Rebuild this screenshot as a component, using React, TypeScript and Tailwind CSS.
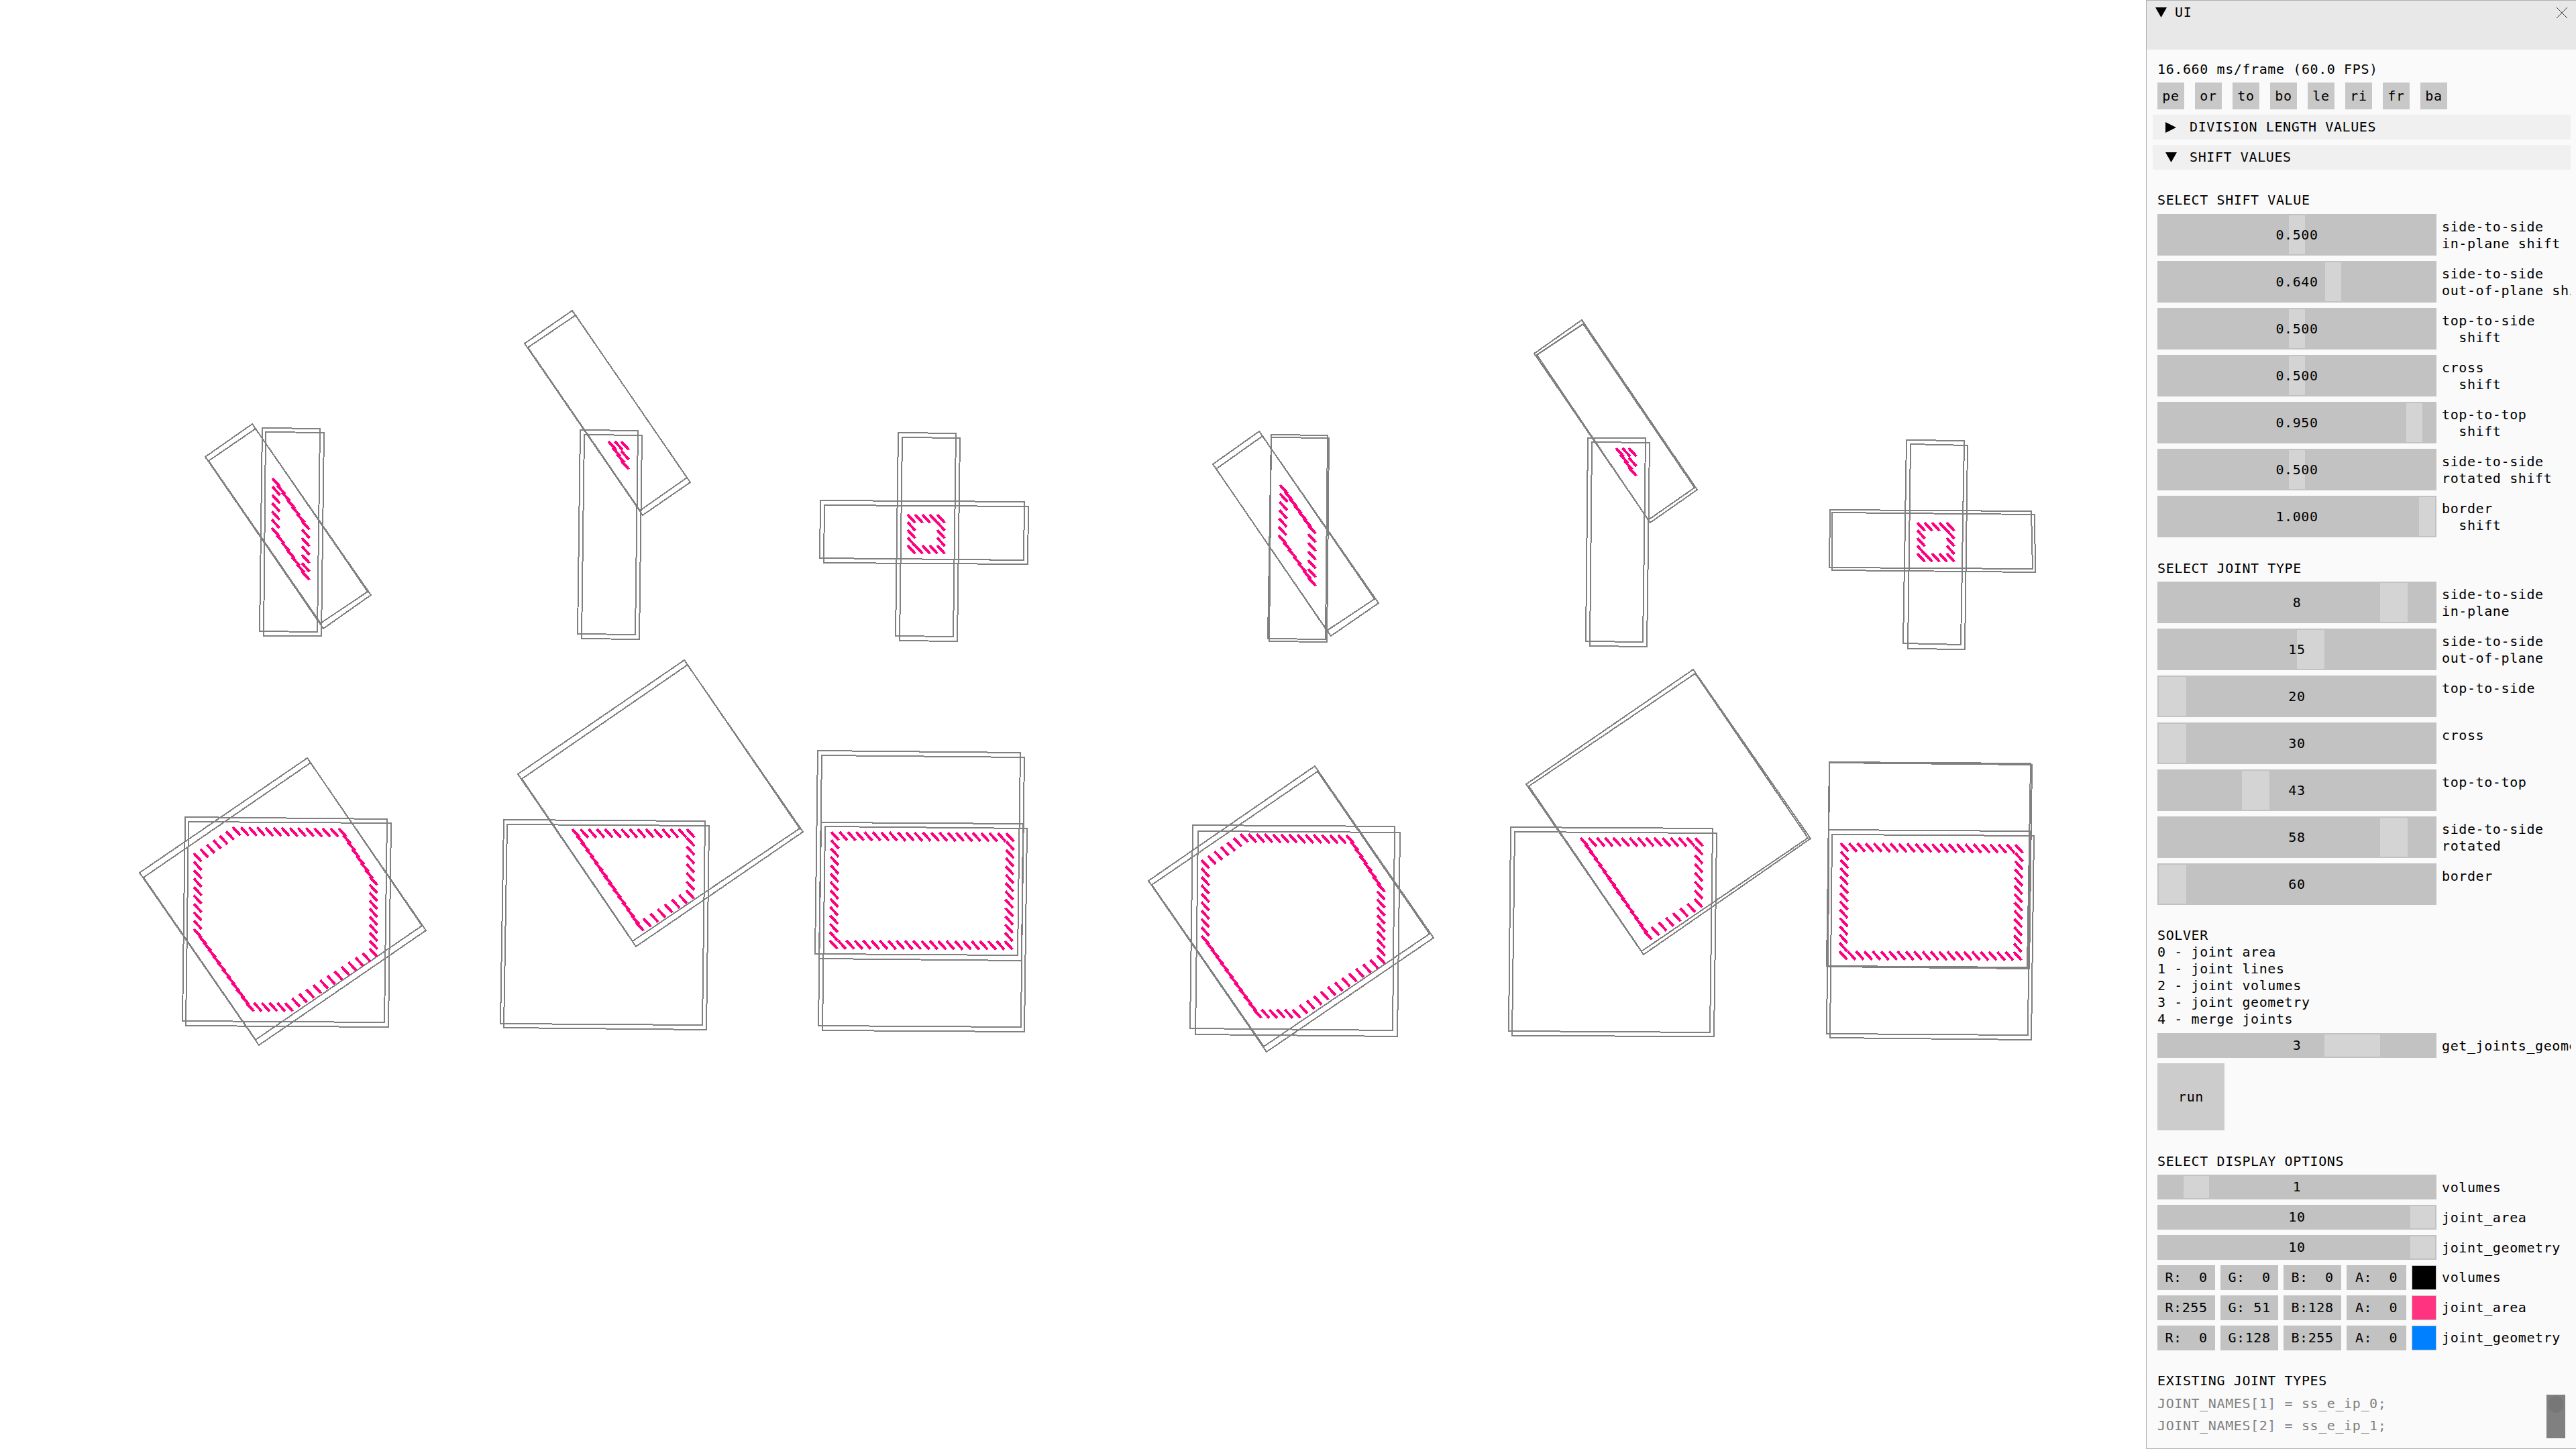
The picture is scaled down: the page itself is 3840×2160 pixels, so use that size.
type Pt = [number, number];

// outlines are in page pixels, read off the reference
const OUTLINES: Pt[][] = [
  // left group, top row
  [[391, 638], [477, 639], [473, 942], [387, 941]],
  [[396, 644], [483, 645], [479, 948], [393, 948]],
  [[376, 632], [553, 887], [482, 937], [306, 681]],
  [[381, 639], [548, 882], [478, 929], [311, 687]],
  [[865, 641], [951, 642], [947, 946], [861, 945]],
  [[871, 648], [957, 649], [953, 953], [867, 952]],
  [[853, 463], [1029, 719], [958, 768], [782, 512]],
  [[858, 470], [1024, 712], [954, 761], [787, 518]],
  [[1339, 645], [1425, 646], [1421, 949], [1335, 948]],
  [[1345, 652], [1431, 653], [1427, 956], [1341, 955]],
  [[1223, 746], [1527, 748], [1526, 835], [1222, 832]],
  [[1229, 753], [1533, 755], [1532, 841], [1228, 839]],
  // left group, bottom row
  [[276, 1218], [577, 1221], [573, 1524], [272, 1522]],
  [[281, 1225], [583, 1227], [579, 1531], [277, 1529]],
  [[458, 1130], [635, 1387], [386, 1558], [208, 1301]],
  [[463, 1137], [629, 1380], [381, 1550], [214, 1308]],
  [[751, 1222], [1051, 1224], [1047, 1528], [746, 1526]],
  [[756, 1229], [1057, 1231], [1053, 1535], [751, 1532]],
  [[1020, 984], [1197, 1240], [948, 1411], [772, 1154]],
  [[1025, 991], [1192, 1235], [943, 1403], [778, 1161]],
  [[1219, 1119], [1521, 1122], [1517, 1424], [1215, 1422]],
  [[1225, 1126], [1527, 1129], [1523, 1432], [1221, 1429]],
  [[1224, 1226], [1525, 1228], [1522, 1531], [1220, 1529]],
  [[1230, 1232], [1531, 1235], [1527, 1538], [1226, 1536]],
  // right group, top row
  [[1895, 648], [1979, 649], [1976, 953], [1890, 952]],
  [[1895, 652], [1981, 653], [1978, 957], [1892, 956]],
  [[1877, 643], [2055, 899], [1984, 948], [1808, 692]],
  [[1882, 650], [2049, 893], [1978, 940], [1813, 699]],
  [[2367, 653], [2453, 653], [2449, 957], [2364, 956]],
  [[2373, 659], [2459, 660], [2455, 964], [2370, 963]],
  [[2358, 477], [2530, 730], [2460, 779], [2287, 527]],
  [[2360, 483], [2526, 727], [2457, 775], [2291, 529]],
  [[2842, 656], [2928, 657], [2923, 961], [2837, 959]],
  [[2848, 662], [2933, 664], [2929, 968], [2844, 967]],
  [[2728, 760], [3028, 762], [3030, 848], [2727, 846]],
  [[2731, 764], [3033, 767], [3034, 853], [2731, 850]],
  // right group, bottom row
  [[1778, 1230], [2079, 1232], [2076, 1536], [1774, 1533]],
  [[1786, 1239], [2087, 1241], [2083, 1545], [1782, 1542]],
  [[1960, 1142], [2137, 1398], [1888, 1568], [1712, 1313]],
  [[1964, 1150], [2131, 1392], [1884, 1560], [1717, 1319]],
  [[2252, 1233], [2553, 1235], [2549, 1539], [2249, 1537]],
  [[2258, 1240], [2559, 1242], [2555, 1545], [2254, 1544]],
  [[2524, 998], [2699, 1250], [2450, 1423], [2275, 1169]],
  [[2527, 1004], [2695, 1249], [2447, 1418], [2279, 1172]],
  [[2727, 1136], [3027, 1138], [3022, 1442], [2723, 1440]],
  [[2727, 1137], [3029, 1140], [3025, 1444], [2725, 1441]],
  [[2726, 1237], [3026, 1239], [3023, 1543], [2723, 1541]],
  [[2731, 1244], [3032, 1246], [3028, 1550], [2728, 1547]],
];

const HATCHES: Pt[][] = [
  [[406, 713], [450, 777], [450, 852], [405, 787]],
  [[907, 658], [926, 658], [926, 687]],
  [[1353, 767], [1397, 767], [1397, 813], [1353, 813]],
  [[347, 1233], [505, 1235], [551, 1307], [551, 1414], [425, 1495], [367, 1495], [289, 1385], [289, 1272]],
  [[853, 1236], [1024, 1236], [1023, 1327], [959, 1369], [948, 1375]],
  [[1239, 1240], [1500, 1242], [1498, 1403], [1237, 1402]],
  [[1908, 723], [1950, 783], [1950, 861], [1906, 798]],
  [[2409, 668], [2428, 668], [2428, 697]],
  [[2858, 779], [2902, 779], [2902, 825], [2858, 825]],
  [[1849, 1243], [2007, 1245], [2053, 1317], [2053, 1424], [1927, 1505], [1869, 1505], [1791, 1395], [1791, 1282]],
  [[2356, 1249], [2527, 1249], [2526, 1340], [2462, 1382], [2451, 1388]],
  [[2744, 1257], [3004, 1259], [3002, 1419], [2742, 1418]],
];

const TICK_SPACING = 12.2;

function hatchTicks(poly: Pt[]) {
  const ticks: Pt[] = [];
  poly.forEach((a, i) => {
    const b = poly[(i + 1) % poly.length];
    const n = Math.max(1, Math.round(Math.hypot(b[0] - a[0], b[1] - a[1]) / TICK_SPACING));
    for (let j = 0; j < n; j++) {
      ticks.push([a[0] + ((b[0] - a[0]) * j) / n, a[1] + ((b[1] - a[1]) * j) / n]);
    }
  });
  return ticks;
}

const Canvas = () => (
  <svg width="3199" height="2160" viewBox="0 0 3199 2160" className="block shrink-0" shapeRendering="crispEdges">
    {OUTLINES.map((poly, i) => (
      <polygon key={i} points={poly.map((p) => p.join(",")).join(" ")} fill="none" stroke="#808080" strokeWidth="2" />
    ))}
    {HATCHES.map((poly, i) => (
      <g key={i} stroke="#ff0080" strokeWidth="4">
        {hatchTicks(poly).map(([x, y], j) => (
          <line key={j} x1={x} y1={y} x2={x + 11.5} y2={y + 12.5} />
        ))}
      </g>
    ))}
  </svg>
);

const Triangle = ({ dir, className }: { dir: "down" | "right"; className: string }) => (
  <svg viewBox="0 0 16 16" preserveAspectRatio="none" className={className}>
    <polygon points={dir === "down" ? "0,0 16,0 8,16" : "0,0 16,8 0,16"} fill="#000" />
  </svg>
);

const Slider = ({ value, label, grab, width, tall = true }: { value: string; label: string; grab: number; width: number; tall?: boolean }) => (
  <div className="flex items-start">
    <div className={`relative flex w-[416px] shrink-0 items-center justify-center bg-[#c2c2c2] ${tall ? "h-[62px]" : "h-[37px]"}`}>
      <div className="absolute top-[2px] bottom-[2px] bg-[#d4d4d4]" style={{ left: grab, width }} />
      <span className="relative">{value}</span>
    </div>
    <div className="ml-2 min-w-0 flex-1 overflow-hidden pt-[7px] whitespace-pre">{label}</div>
  </div>
);

const ColorRow = ({ rgba, swatch, label }: { rgba: string[]; swatch: string; label: string }) => (
  <div className="flex h-[37px] items-center">
    {rgba.map((c, i) => (
      <div key={i} className={`mr-2 flex h-[37px] items-center justify-center bg-[#c2c2c2] whitespace-pre ${i === 3 ? "w-[89px]" : "w-[86px]"}`}>
        {c}
      </div>
    ))}
    <div className={`h-[37px] w-[37px] border border-[#c4c4c4] ${swatch}`} />
    <div className="ml-2 whitespace-pre">{label}</div>
  </div>
);

const SHIFT_ROWS = [
  { value: "0.500", label: "side-to-side\nin-plane shift", grab: 196 },
  { value: "0.640", label: "side-to-side\nout-of-plane shift", grab: 250 },
  { value: "0.500", label: "top-to-side\n  shift", grab: 196 },
  { value: "0.500", label: "cross\n  shift", grab: 196 },
  { value: "0.950", label: "top-to-top\n  shift", grab: 371 },
  { value: "0.500", label: "side-to-side\nrotated shift", grab: 196 },
  { value: "1.000", label: "border\n  shift", grab: 390 },
];

const JOINT_ROWS = [
  { value: "8", label: "side-to-side\nin-plane", grab: 332 },
  { value: "15", label: "side-to-side\nout-of-plane", grab: 208 },
  { value: "20", label: "top-to-side", grab: 2 },
  { value: "30", label: "cross", grab: 2 },
  { value: "43", label: "top-to-top", grab: 126 },
  { value: "58", label: "side-to-side\nrotated", grab: 332 },
  { value: "60", label: "border", grab: 2 },
];

const Panel = () => (
  <div className="flex h-[2160px] w-[641px] shrink-0 flex-col overflow-hidden border border-r-0 border-[#b0b0b0] bg-[#fafafa] font-['DejaVu_Sans_Mono',monospace] text-[20px] leading-[25px] tracking-[0.6px] text-black">
    <div className="flex h-[73px] shrink-0 items-start bg-[#e8e8e8] pt-[5px] pl-[13px]">
      <Triangle dir="down" className="mt-[5px] h-[15px] w-[17px]" />
      <span className="ml-3">UI</span>
      <svg viewBox="0 0 16 16" className="mt-[5px] mr-[13px] ml-auto h-4 w-4">
        <path d="M0 0L16 16M16 0L0 16" stroke="#333" strokeWidth="1" fill="none" />
      </svg>
    </div>
    <div className="flex flex-1 flex-col pr-2 pl-4">
      <div className="mt-[17px]">16.660 ms/frame (60.0 FPS)</div>
      <div className="mt-[7px] flex gap-4">
        {["pe", "or", "to", "bo", "le", "ri", "fr", "ba"].map((b) => (
          <div key={b} className="flex h-10 w-10 items-center justify-center bg-[#c8c8c8]">{b}</div>
        ))}
      </div>
      <div className="mt-2 -ml-[7px] flex h-[37px] items-center bg-[#f0f0f0] pl-[19px]">
        <Triangle dir="right" className="h-4 w-4" />
        <span className="ml-5">DIVISION LENGTH VALUES</span>
      </div>
      <div className="mt-2 -ml-[7px] flex h-[37px] items-center bg-[#f0f0f0] pl-[19px]">
        <Triangle dir="down" className="h-[15px] w-[17px]" />
        <span className="ml-[19px]">SHIFT VALUES</span>
      </div>

      <div className="mt-[33px] mb-2">SELECT SHIFT VALUE</div>
      <div className="flex flex-col gap-2">
        {SHIFT_ROWS.map((r, i) => (
          <Slider key={i} value={r.value} label={r.label} grab={r.grab} width={24} />
        ))}
      </div>

      <div className="mt-[34px] mb-[7px]">SELECT JOINT TYPE</div>
      <div className="flex flex-col gap-2">
        {JOINT_ROWS.map((r, i) => (
          <Slider key={i} value={r.value} label={r.label} grab={r.grab} width={41} />
        ))}
      </div>

      <div className="mt-[33px] mb-2 whitespace-pre">
        {"SOLVER\n0 - joint area\n1 - joint lines\n2 - joint volumes\n3 - joint geometry\n4 - merge joints"}
      </div>
      <Slider value="3" label="get_joints_geometry" grab={249} width={83} tall={false} />
      <div className="mt-2 flex h-[100px] w-[100px] items-center justify-center bg-[#cccccc]">run</div>

      <div className="mt-[34px] mb-[7px]">SELECT DISPLAY OPTIONS</div>
      <div className="flex flex-col gap-2">
        <Slider value="1" label="volumes" grab={39} width={38} tall={false} />
        <Slider value="10" label="joint_area" grab={377} width={37} tall={false} />
        <Slider value="10" label="joint_geometry" grab={377} width={37} tall={false} />
        <ColorRow rgba={["R:  0", "G:  0", "B:  0", "A:  0"]} swatch="bg-black" label="volumes" />
        <ColorRow rgba={["R:255", "G: 51", "B:128", "A:  0"]} swatch="bg-[#ff3380]" label="joint_area" />
        <ColorRow rgba={["R:  0", "G:128", "B:255", "A:  0"]} swatch="bg-[#0080ff]" label="joint_geometry" />
      </div>

      <div className="mt-[33px] mb-2">EXISTING JOINT TYPES</div>
      <div className="flex items-start">
        <div className="flex flex-col gap-2 pt-px text-[#808080]">
          <div>JOINT_NAMES[1] = ss_e_ip_0;</div>
          <div>JOINT_NAMES[2] = ss_e_ip_1;</div>
        </div>
        <div className="mr-2 ml-auto h-[65px] w-7 bg-[#808080] px-[3px] pt-[2px]">
          <div className="h-[25px] rounded-full bg-[#777777]" />
        </div>
      </div>
    </div>
  </div>
);

export default function App() {
  return (
    <div className="flex h-[2160px] w-[3840px] overflow-hidden bg-white">
      <Canvas />
      <Panel />
    </div>
  );
}
